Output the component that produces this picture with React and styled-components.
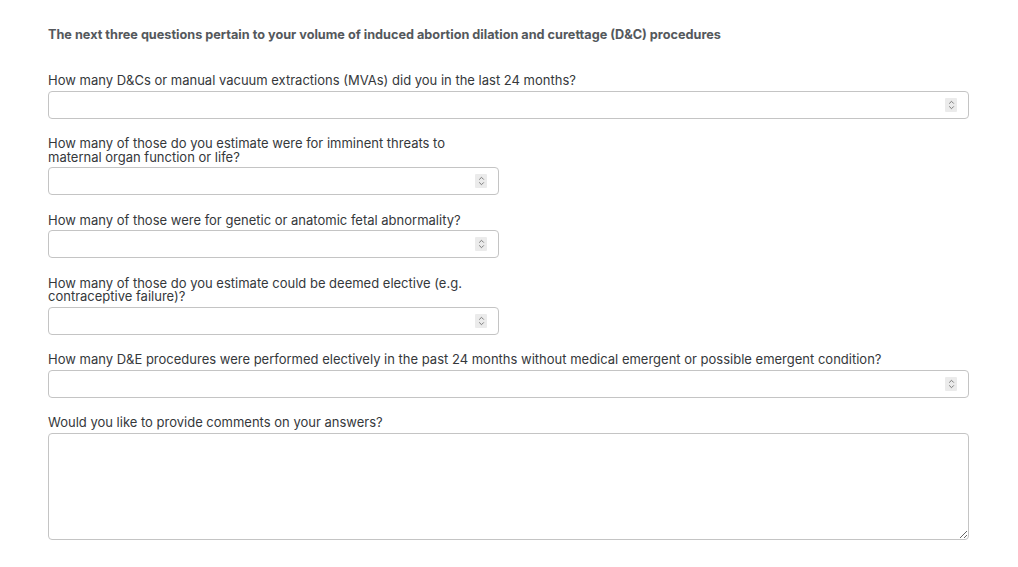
import React from "react";
import styled, { createGlobalStyle } from "styled-components";

const GlobalStyle = createGlobalStyle`
  body {
    margin: 0;
    background: #ffffff;
    font-family: Inter, "Noto Sans", sans-serif;
  }
`;

const questions = [
  {
    id: "q1",
    label: "How many D&Cs or manual vacuum extractions (MVAs) did you in the last 24 months?",
    full: true,
  },
  {
    id: "q2",
    label: "How many of those do you estimate were for imminent threats to maternal organ function or life?",
  },
  {
    id: "q3",
    label: "How many of those were for genetic or anatomic fetal abnormality?",
  },
  {
    id: "q4",
    label: "How many of those do you estimate could be deemed elective (e.g. contraceptive failure)?",
  },
  {
    id: "q5",
    label:
      "How many D&E procedures were performed electively in the past 24 months without medical emergent or possible emergent condition?",
    full: true,
  },
];

export default function App() {
  return (
    <Page>
      <GlobalStyle />
      <Heading>
        The next three questions pertain to your volume of induced abortion dilation and curettage (D&C) procedures
      </Heading>
      <Form>
        {questions.map((q) => (
          <Field key={q.id} full={q.full}>
            <Label htmlFor={q.id}>{q.label}</Label>
            <NumberBox>
              <NumberInput id={q.id} type="text" inputMode="numeric" />
              <Spinner>
                <svg width="7" height="10" viewBox="0 0 7 10" fill="none">
                  <path d="M1.2 3.6 L3.5 1.3 L5.8 3.6" stroke="#7a7a7a" strokeWidth="1" />
                  <path d="M1.2 6.4 L3.5 8.7 L5.8 6.4" stroke="#7a7a7a" strokeWidth="1" />
                </svg>
              </Spinner>
            </NumberBox>
          </Field>
        ))}
        <Field full>
          <Label htmlFor="comments">Would you like to provide comments on your answers?</Label>
          <TextArea id="comments" />
        </Field>
      </Form>
    </Page>
  );
}

const Page = styled.div`
  padding: 28px 49px 0 48px;
  color: #35383b;
`;

const Heading = styled.h2`
  margin: 0;
  font-size: 12.7px;
  font-weight: 700;
  line-height: 14px;
  color: #54585c;
`;

const Form = styled.div`
  display: flex;
  flex-direction: column;
  gap: 17.5px;
  margin-top: 31px;
`;

const Field = styled.div`
  display: flex;
  flex-direction: column;
  gap: 3px;
  width: ${(p) => (p.full ? "921px" : "451px")};
`;

const Label = styled.label`
  font-size: 13px;
  line-height: 13.5px;
  color: #35383b;
  padding-top: 1px;
`;

const NumberBox = styled.div`
  display: flex;
  align-items: center;
  height: 28px;
  box-sizing: border-box;
  border: 1px solid #c4c4c4;
  border-radius: 4px;
  background: #fff;
  padding: 0 11px 0 8px;
`;

const NumberInput = styled.input`
  flex: 1;
  border: none;
  outline: none;
  font: inherit;
  font-size: 13px;
  background: transparent;
  padding: 0;
`;

const Spinner = styled.span`
  display: flex;
  align-items: center;
  justify-content: center;
  width: 12px;
  height: 14px;
  background: #ebebeb;
  border-radius: 1px;
`;

const TextArea = styled.textarea`
  height: 107px;
  box-sizing: border-box;
  border: 1px solid #c4c4c4;
  border-radius: 4px;
  font: inherit;
  font-size: 13px;
  padding: 6px 8px;
  resize: vertical;
  outline: none;
`;
